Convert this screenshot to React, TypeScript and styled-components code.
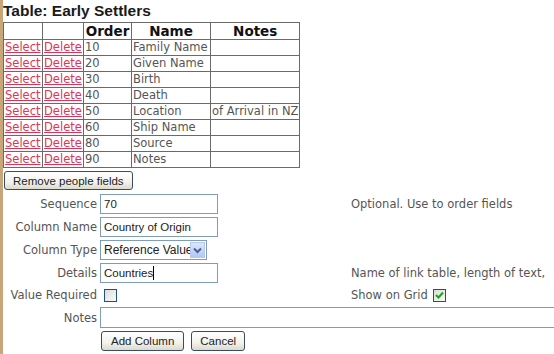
import React from "react";
import styled, { createGlobalStyle } from "styled-components";

const Global = createGlobalStyle`
  html, body { margin: 0; padding: 0; background: #fff; overflow: hidden; }
  body { font-family: "DejaVu Sans", Verdana, sans-serif; }
`;

const Page = styled.div`
  width: 554px;
  height: 354px;
  box-sizing: border-box;
  border-left: 3px solid #c9a67a;
  background: #fff;
  overflow: hidden;
`;

const Title = styled.h2`
  margin: 0;
  height: 22px;
  font-family: "Liberation Sans", Arial, sans-serif;
  font-weight: bold;
  font-size: 15.5px;
  line-height: 21px;
  color: #1a1a1a;
`;

const Grid = styled.table`
  border-collapse: collapse;
  border: 1px solid #6a6a6a;
  font-size: 11.5px;
  color: #555;
  table-layout: fixed;
`;

const Th = styled.th<{ $w: number }>`
  width: ${(p) => p.$w}px;
  height: 16px;
  padding: 0 1px;
  border: 1px solid #6a6a6a;
  font-size: 13.5px;
  font-weight: bold;
  color: #111;
  text-align: center;
  line-height: 16px;
`;

const Td = styled.td`
  height: 15px;
  padding: 0 1px;
  border: 1px solid #6a6a6a;
  line-height: 15px;
  white-space: nowrap;
  overflow: hidden;
`;

const Link = styled.a`
  color: #de3456;
  text-decoration: underline;
  cursor: pointer;
`;

const XpButton = styled.button<{ $h?: number; $px?: number }>`
  font-family: "Liberation Sans", Arial, sans-serif;
  font-size: 11.5px;
  color: #222;
  height: ${(p) => p.$h ?? 19}px;
  padding: 0 ${(p) => p.$px ?? 8}px;
  border: 1px solid #3b4c62;
  border-radius: 3px;
  background: linear-gradient(#ffffff, #f3f2ec 60%, #dcd9cc);
  line-height: 16px;
`;

const ButtonBar = styled.div`
  margin-top: 3px;
  padding-left: 1px;
  display: flex;
`;

const Form = styled.div`
  margin-top: 4px;
  display: grid;
  grid-template-columns: 94px 248px auto;
  grid-template-rows: 20px 20px 20px 20px 18px 21px 20px;
  column-gap: 3px;
  row-gap: 3px;
  font-size: 11.5px;
  color: #555;
  align-items: center;
`;

const Label = styled.div`
  text-align: right;
  white-space: nowrap;
`;

const Hint = styled.div`
  white-space: nowrap;
  display: flex;
  align-items: center;
  gap: 5px;
`;

const TextBox = styled.div<{ $w: number; $h?: number }>`
  width: ${(p) => p.$w}px;
  height: ${(p) => p.$h ?? 20}px;
  box-sizing: border-box;
  border: 1px solid #7f9db9;
  background: #fff;
  font-family: "Liberation Sans", Arial, sans-serif;
  font-size: 11.5px;
  color: #222;
  padding: 0 3px;
  line-height: 18px;
  display: flex;
  align-items: center;
`;

const Caret = styled.span`
  display: inline-block;
  width: 1px;
  height: 14px;
  background: #000;
`;

const SelectBox = styled.div`
  width: 107px;
  height: 20px;
  box-sizing: border-box;
  border: 1px solid #7f9db9;
  background: #fff;
  display: flex;
  align-items: center;
  font-family: "Liberation Sans", Arial, sans-serif;
  font-size: 12px;
  color: #222;
`;

const SelectText = styled.span`
  flex: 1;
  overflow: hidden;
  white-space: nowrap;
  padding-left: 3px;
`;

const Arrow = styled.span`
  flex: none;
  width: 15px;
  height: 16px;
  margin-right: 1px;
  background: linear-gradient(#dbe6fd, #b3c8f6);
  border: 1px solid #b6c8f2;
  box-sizing: border-box;
  display: flex;
  align-items: center;
  justify-content: center;
`;

const Check = styled.span<{ $ml?: number }>`
  width: 13px;
  height: 13px;
  box-sizing: border-box;
  border: 1px solid #1c5180;
  background: linear-gradient(135deg, #dcdcd7, #fbfbf9);
  display: inline-flex;
  align-items: center;
  justify-content: center;
  margin-left: ${(p) => p.$ml ?? 0}px;
`;

const Cell = styled.div`
  display: flex;
  align-items: center;
`;

const Wide = styled.div`
  grid-column: 2 / 4;
  display: flex;
`;

const Actions = styled.div`
  grid-column: 2 / 4;
  display: flex;
  gap: 7px;
  padding-left: 1px;
`;

const rows: [string, string, string][] = [
  ["10", "Family Name", ""],
  ["20", "Given Name", ""],
  ["30", "Birth", ""],
  ["40", "Death", ""],
  ["50", "Location", "of Arrival in NZ"],
  ["60", "Ship Name", ""],
  ["80", "Source", ""],
  ["90", "Notes", ""],
];

export default function App() {
  return (
    <Page>
      <Global />
      <Title>Table: Early Settlers</Title>
      <Grid>
        <thead>
          <tr>
            <Th $w={36}></Th>
            <Th $w={38}></Th>
            <Th $w={45}>Order</Th>
            <Th $w={76}>Name</Th>
            <Th $w={86}>Notes</Th>
          </tr>
        </thead>
        <tbody>
          {rows.map(([o, n, t]) => (
            <tr key={o}>
              <Td><Link>Select</Link></Td>
              <Td><Link>Delete</Link></Td>
              <Td>{o}</Td>
              <Td>{n}</Td>
              <Td>{t}</Td>
            </tr>
          ))}
        </tbody>
      </Grid>
      <ButtonBar>
        <XpButton>Remove people fields</XpButton>
      </ButtonBar>
      <Form>
        <Label>Sequence</Label>
        <TextBox $w={118}>70</TextBox>
        <Hint>Optional. Use to order fields</Hint>

        <Label>Column Name</Label>
        <TextBox $w={118}>Country of Origin</TextBox>
        <div />

        <Label>Column Type</Label>
        <SelectBox>
          <SelectText>Reference Value</SelectText>
          <Arrow>
            <svg width="9" height="7" viewBox="0 0 9 7">
              <path d="M1 1.5 L4.5 5 L8 1.5" fill="none" stroke="#4d6185" strokeWidth="2" />
            </svg>
          </Arrow>
        </SelectBox>
        <div />

        <Label>Details</Label>
        <TextBox $w={118}>Countries<Caret /></TextBox>
        <Hint>Name of link table, length of text,</Hint>

        <Label>Value Required</Label>
        <Cell><Check $ml={4} /></Cell>
        <Hint>
          Show on Grid
          <Check>
            <svg width="9" height="8" viewBox="0 0 9 8">
              <path d="M1 4 L3.5 6.5 L8 1.5" fill="none" stroke="#21a121" strokeWidth="2" />
            </svg>
          </Check>
        </Hint>

        <Label>Notes</Label>
        <Wide><TextBox $w={520} $h={21} /></Wide>

        <div />
        <Actions>
          <XpButton $h={20} $px={9}>Add Column</XpButton>
          <XpButton $h={20} $px={8}>Cancel</XpButton>
        </Actions>
      </Form>
    </Page>
  );
}
